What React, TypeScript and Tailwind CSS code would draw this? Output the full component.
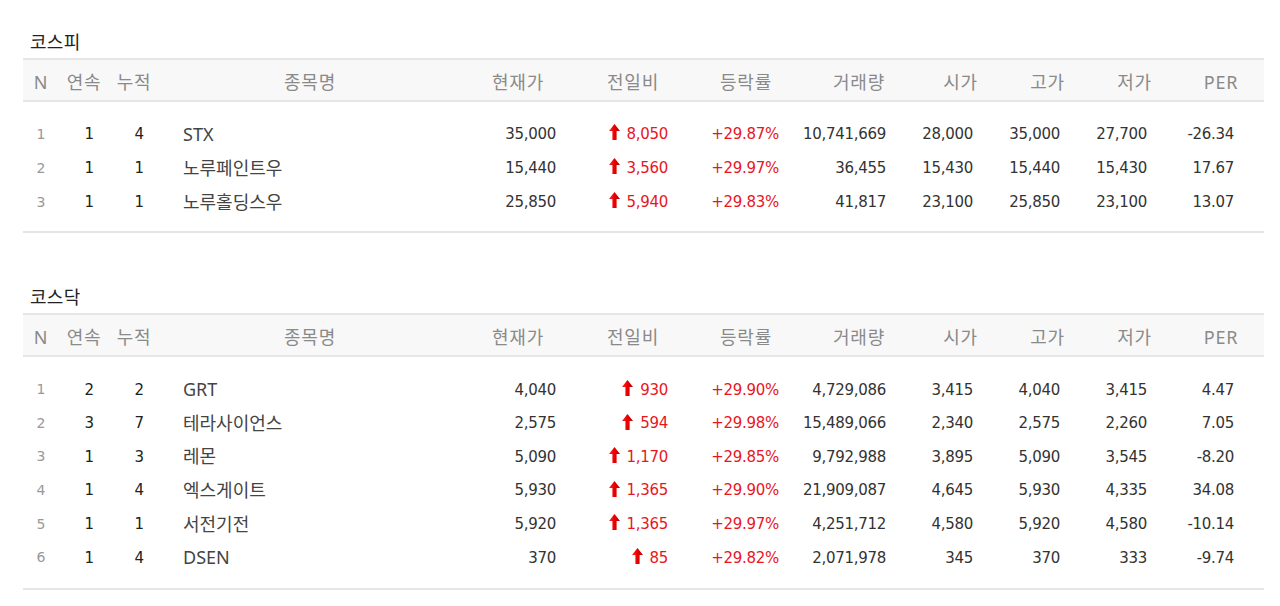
import React from "react";

type Row = {
  n: number;
  cont: number;
  acc: number;
  name: string;
  price: string;
  diff: string;
  rate: string;
  vol: string;
  open: string;
  high: string;
  low: string;
  per: string;
};

const kospi: Row[] = [
  { n: 1, cont: 1, acc: 4, name: "STX", price: "35,000", diff: "8,050", rate: "+29.87%", vol: "10,741,669", open: "28,000", high: "35,000", low: "27,700", per: "-26.34" },
  { n: 2, cont: 1, acc: 1, name: "노루페인트우", price: "15,440", diff: "3,560", rate: "+29.97%", vol: "36,455", open: "15,430", high: "15,440", low: "15,430", per: "17.67" },
  { n: 3, cont: 1, acc: 1, name: "노루홀딩스우", price: "25,850", diff: "5,940", rate: "+29.83%", vol: "41,817", open: "23,100", high: "25,850", low: "23,100", per: "13.07" },
];

const kosdaq: Row[] = [
  { n: 1, cont: 2, acc: 2, name: "GRT", price: "4,040", diff: "930", rate: "+29.90%", vol: "4,729,086", open: "3,415", high: "4,040", low: "3,415", per: "4.47" },
  { n: 2, cont: 3, acc: 7, name: "테라사이언스", price: "2,575", diff: "594", rate: "+29.98%", vol: "15,489,066", open: "2,340", high: "2,575", low: "2,260", per: "7.05" },
  { n: 3, cont: 1, acc: 3, name: "레몬", price: "5,090", diff: "1,170", rate: "+29.85%", vol: "9,792,988", open: "3,895", high: "5,090", low: "3,545", per: "-8.20" },
  { n: 4, cont: 1, acc: 4, name: "엑스게이트", price: "5,930", diff: "1,365", rate: "+29.90%", vol: "21,909,087", open: "4,645", high: "5,930", low: "4,335", per: "34.08" },
  { n: 5, cont: 1, acc: 1, name: "서전기전", price: "5,920", diff: "1,365", rate: "+29.97%", vol: "4,251,712", open: "4,580", high: "5,920", low: "4,580", per: "-10.14" },
  { n: 6, cont: 1, acc: 4, name: "DSEN", price: "370", diff: "85", rate: "+29.82%", vol: "2,071,978", open: "345", high: "370", low: "333", per: "-9.74" },
];

const GRID =
  "grid grid-cols-[36px_50px_50px_302px_114px_116px_110px_116px_87px_87px_87px_86px]";

const KR = "font-['Noto_Sans','Noto_Sans_CJK_KR',sans-serif]";
const NUM = "font-['DejaVu_Sans',sans-serif] text-[15px] tracking-[-0.3px]";

function UpArrow() {
  return (
    <svg width="11" height="16" viewBox="0 0 11 16" className="inline-block mr-[7px] -mt-[4px] align-middle">
      <defs>
        <linearGradient id="ag" x1="0" y1="0" x2="1" y2="0">
          <stop offset="0" stopColor="#ff2a2a" />
          <stop offset="0.5" stopColor="#e80000" />
          <stop offset="1" stopColor="#b80000" />
        </linearGradient>
      </defs>
      <path d="M5.5 0 L11 7 L7.6 7 L7.6 16 L3.4 16 L3.4 7 L0 7 Z" fill="url(#ag)" />
    </svg>
  );
}

function Header() {
  const h = `${KR} text-[18px] tracking-[0.8px] text-[#8a8a8a] text-center`;
  return (
    <div className={`${GRID} h-[44px] items-center pt-[5px] bg-[#f8f8f8] border-y-2 border-[#e6e6e6]`}>
      <div className={h}>N</div>
      <div className={h}>연속</div>
      <div className={h}>누적</div>
      <div className={h}>종목명</div>
      <div className={h}>현재가</div>
      <div className={h}>전일비</div>
      <div className={h}>등락률</div>
      <div className={h}>거래량</div>
      <div className={h}>시가</div>
      <div className={h}>고가</div>
      <div className={h}>저가</div>
      <div className={h}>PER</div>
    </div>
  );
}

function DataRow({ r, h }: { r: Row; h: string }) {
  return (
    <div className={`${GRID} ${h} items-center text-[#333]`}>
      <div className={`font-['DejaVu_Sans',sans-serif] text-[14px] text-[#999] text-center`}>{r.n}</div>
      <div className={`${NUM} text-[#222] text-center pl-[10px]`}>{r.cont}</div>
      <div className={`${NUM} text-[#222] text-center pl-[10px]`}>{r.acc}</div>
      <div className={`${KR} text-[18px] text-[#444] pl-[24px]`}>{r.name}</div>
      <div className={`${NUM} text-right pr-[19px]`}>{r.price}</div>
      <div className={`${NUM} text-right pr-[23px] text-[#e8161e]`}>
        <UpArrow />
        {r.diff}
      </div>
      <div className={`${NUM} text-right pr-[22px] text-[#e8161e]`}>{r.rate}</div>
      <div className={`${NUM} text-right pr-[31px]`}>{r.vol}</div>
      <div className={`${NUM} text-right pr-[31px]`}>{r.open}</div>
      <div className={`${NUM} text-right pr-[31px]`}>{r.high}</div>
      <div className={`${NUM} text-right pr-[31px]`}>{r.low}</div>
      <div className={`${NUM} text-right pr-[30px]`}>{r.per}</div>
    </div>
  );
}

function Section({ title, rows, rowH, bodyPad }: { title: string; rows: Row[]; rowH: string; bodyPad: string }) {
  return (
    <section className="w-[1241px]">
      <h2 className={`${KR} text-[18px] tracking-[0.3px] text-[#222] pl-[7px] leading-[24px] mb-[4px]`}>{title}</h2>
      <Header />
      <div className={`${bodyPad} border-b-2 border-[#e6e6e6]`}>
        {rows.map((r) => (
          <DataRow key={r.n} r={r} h={rowH} />
        ))}
      </div>
    </section>
  );
}

export default function App() {
  return (
    <div className="w-[1280px] h-[606px] bg-white pl-[23px] pt-[30px] overflow-hidden">
      <Section title="코스피" rows={kospi} rowH="h-[34px]" bodyPad="pt-[15px] pb-[12px]" />
      <div className="h-[52px]" />
      <Section title="코스닥" rows={kosdaq} rowH="h-[33.6px]" bodyPad="pt-[16px] pb-[13px]" />
    </div>
  );
}
